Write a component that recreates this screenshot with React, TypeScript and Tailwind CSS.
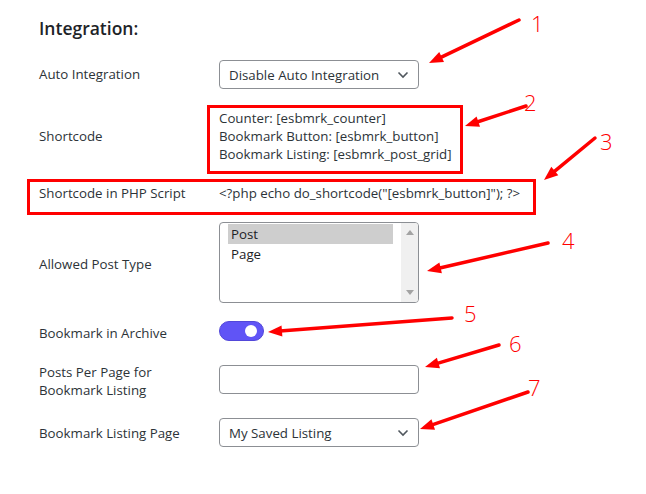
import React from "react";

type ArrowProps = { x1: number; y1: number; x2: number; y2: number };

function Arrow({ x1, y1, x2, y2 }: ArrowProps) {
  const dx = x2 - x1;
  const dy = y2 - y1;
  const len = Math.sqrt(dx * dx + dy * dy);
  const ux = dx / len;
  const uy = dy / len;
  const hl = 14;
  const hw = 5.5;
  const bx = x2 - ux * hl;
  const by = y2 - uy * hl;
  const px = -uy;
  const py = ux;
  const pts = `${x2},${y2} ${bx + px * hw},${by + py * hw} ${bx - px * hw},${by - py * hw}`;
  return (
    <g>
      <line x1={x1} y1={y1} x2={bx + ux * 2} y2={by + uy * 2} stroke="#ff0000" strokeWidth={3.5} strokeLinecap="round" />
      <polygon points={pts} fill="#ff0000" />
    </g>
  );
}

function Chevron() {
  return (
    <svg width="12" height="8" viewBox="0 0 12 8" className="shrink-0">
      <polyline points="1.5,1.5 6,6 10.5,1.5" fill="none" stroke="#50575e" strokeWidth="1.6" />
    </svg>
  );
}

function Select({ value }: { value: string }) {
  return (
    <div className="w-[200px] h-[29px] border border-[#8c8f94] rounded-[4px] bg-white flex items-center justify-between pl-[9px] pr-[9px] text-[#2c3338]">
      <span className="leading-[18px]">{value}</span>
      <Chevron />
    </div>
  );
}

const labels = [
  { n: "1", x: 531, y: 12 },
  { n: "2", x: 524, y: 91 },
  { n: "3", x: 600, y: 130 },
  { n: "4", x: 562, y: 229 },
  { n: "5", x: 464, y: 302 },
  { n: "6", x: 509, y: 332 },
  { n: "7", x: 528, y: 376 },
];

export default function App() {
  return (
    <div className="relative w-[646px] h-[494px] bg-white overflow-hidden font-['Open_Sans',sans-serif] text-[13.3px] text-[#2c3338]">
      <div className="pl-[39px] pt-[16px]">
        <h2 className="text-[17.5px] font-semibold leading-[25px] text-[#1d2327]">Integration:</h2>

        <div className="mt-[19px] flex items-start">
          <div className="w-[180px] mt-[5px] leading-[18px]">Auto Integration</div>
          <Select value="Disable Auto Integration" />
        </div>

        <div className="mt-[20px] flex items-start">
          <div className="w-[180px] mt-[18px] leading-[18px]">Shortcode</div>
          <div className="leading-[18px]">
            <div>Counter: [esbmrk_counter]</div>
            <div>Bookmark Button: [esbmrk_button]</div>
            <div>Bookmark Listing: [esbmrk_post_grid]</div>
          </div>
        </div>

        <div className="mt-[21px] flex items-start leading-[18px]">
          <div className="w-[180px]">Shortcode in PHP Script</div>
          <div>&lt;?php echo do_shortcode("[esbmrk_button]"); ?&gt;</div>
        </div>

        <div className="mt-[20px] flex items-start">
          <div className="w-[180px] mt-[33px] leading-[18px]">Allowed Post Type</div>
          <div className="w-[200px] h-[81px] border border-[#8c8f94] rounded-[4px] bg-white flex overflow-hidden">
            <div className="flex-1 pl-[8px] pr-[8px] pt-[1px] text-[#1d2327]">
              <div className="h-[20px] leading-[20px] pl-[3px] bg-[#cecece]">Post</div>
              <div className="h-[20px] leading-[20px] pl-[3px]">Page</div>
            </div>
            <div className="w-[17px] bg-[#f0f0f0] flex flex-col items-center justify-between py-[7px]">
              <svg width="8" height="5" viewBox="0 0 8 5">
                <polygon points="4,0 8,5 0,5" fill="#a3a3a3" />
              </svg>
              <svg width="8" height="5" viewBox="0 0 8 5">
                <polygon points="0,0 8,0 4,5" fill="#a3a3a3" />
              </svg>
            </div>
          </div>
        </div>

        <div className="mt-[18px] flex items-start">
          <div className="w-[180px] mt-[3px] leading-[18px]">Bookmark in Archive</div>
          <div className="w-[45px] h-[20px] rounded-full bg-[#6054f6] border border-[#5247d9] flex items-center justify-end pr-[6px]">
            <div className="w-[12px] h-[12px] rounded-full bg-white" />
          </div>
        </div>

        <div className="mt-[21px] flex items-start">
          <div className="w-[180px] leading-[18px]">
            <div>Posts Per Page for</div>
            <div>Bookmark Listing</div>
          </div>
          <div className="mt-[2px] w-[200px] h-[29px] border border-[#8c8f94] rounded-[4px] bg-white" />
        </div>

        <div className="mt-[19px] flex items-start">
          <div className="w-[180px] mt-[6px] leading-[18px]">Bookmark Listing Page</div>
          <Select value="My Saved Listing" />
        </div>
      </div>

      <svg className="absolute left-0 top-0 pointer-events-none" width="646" height="494" viewBox="0 0 646 494">
        <rect x="208.5" y="106.5" width="253" height="66" fill="none" stroke="#ff0000" strokeWidth="3" />
        <rect x="28.5" y="180.5" width="506" height="33" fill="none" stroke="#ff0000" strokeWidth="3" />
        <Arrow x1={519} y1={20} x2={429} y2={63} />
        <Arrow x1={526} y1={106} x2={465} y2={126} />
        <Arrow x1={595} y1={138} x2={544} y2={180} />
        <Arrow x1={548} y1={243} x2={427} y2={271} />
        <Arrow x1={452} y1={318} x2={268} y2={332} />
        <Arrow x1={499} y1={345} x2={425} y2={367} />
        <Arrow x1={528} y1={392} x2={420} y2={429} />
      </svg>

      {labels.map((l) => (
        <span
          key={l.n}
          className="absolute text-[22px] leading-[22px] font-light text-[#ff0000] font-['Open_Sans',sans-serif]"
          style={{ left: l.x, top: l.y }}
        >
          {l.n}
        </span>
      ))}
    </div>
  );
}
